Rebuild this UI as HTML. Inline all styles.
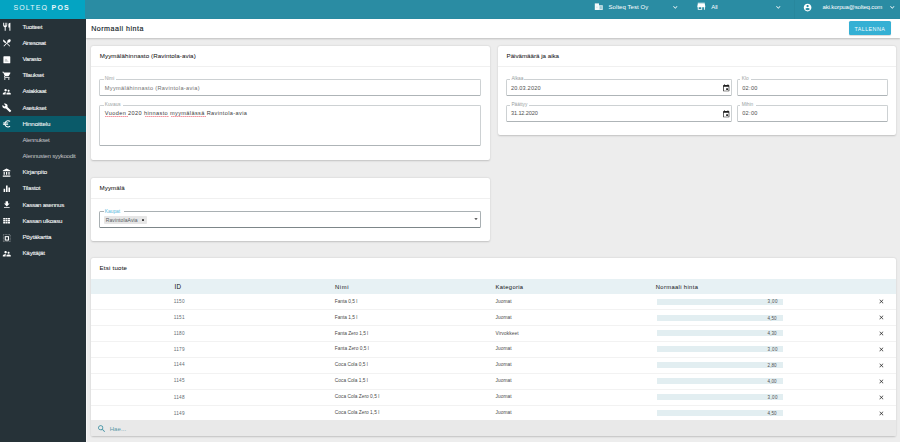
<!DOCTYPE html>
<html><head><meta charset="utf-8"><style>
html,body{margin:0;padding:0;}
body{width:900px;height:442px;overflow:hidden;position:relative;background:#ededed;font-family:"Liberation Sans", sans-serif;}
.t{position:absolute;white-space:nowrap;}
svg{display:block}
</style></head><body>
<div style="position:absolute;left:0.00px;top:0.00px;width:85.20px;height:19.00px;background:#04a4c2"></div>
<div style="position:absolute;left:85.20px;top:0.00px;width:814.80px;height:19.00px;background:#2a8ca3"></div>
<div style="position:absolute;left:794.30px;top:0.00px;width:0.70px;height:19.00px;background:rgba(0,0,0,0.03)"></div>
<div style="position:absolute;left:85.80px;top:19.00px;width:1.10px;height:423.00px;background:#f6f6f6"></div>
<div style="position:absolute;left:86.90px;top:37.50px;width:813.10px;height:404.50px;background:#ededed"></div>
<div style="position:absolute;left:85.20px;top:19.00px;width:814.80px;height:18.50px;background:#fff;box-shadow:0 0.7px 1.8px rgba(0,0,0,0.2)"></div>
<div style="position:absolute;left:0.00px;top:19.00px;width:85.55px;height:423.00px;background:#263238"></div>
<div style="position:absolute;left:0.00px;top:116.02px;width:85.55px;height:16.17px;background:#0a5a69"></div>
<div style="position:absolute;left:849.00px;top:21.30px;width:41.90px;height:14.20px;background:#35b0d4;border-radius:1.6px;box-shadow:0 0.5px 1px rgba(0,0,0,0.15)"></div>
<div style="position:absolute;left:90.80px;top:45.70px;width:398.80px;height:114.60px;background:#fff;border-radius:2px;box-shadow:0 0.8px 1.8px rgba(0,0,0,0.19)"></div>
<div style="position:absolute;left:90.80px;top:66.00px;width:398.80px;height:0.60px;background:#f0f0f0"></div>
<div style="position:absolute;left:99.40px;top:79.30px;width:381.30px;height:16.60px;border:0.8px solid #cdd1d3;border-bottom-color:#aeb4b7;border-radius:1.5px;box-sizing:border-box"></div>
<div style="position:absolute;left:103.60px;top:78.80px;width:12.60px;height:1.70px;background:#fff"></div>
<div style="position:absolute;left:99.40px;top:105.10px;width:381.30px;height:41.20px;border:0.8px solid #cdd1d3;border-bottom-color:#aeb4b7;border-radius:1.5px;box-sizing:border-box"></div>
<div style="position:absolute;left:103.60px;top:104.60px;width:19.40px;height:1.70px;background:#fff"></div>
<div style="position:absolute;left:105.00px;top:115.50px;width:23.00px;height:1.00px;background:repeating-linear-gradient(90deg,rgba(236,80,96,0.6) 0 1px,rgba(236,80,96,0.35) 1px 2px)"></div>
<div style="position:absolute;left:144.90px;top:115.50px;width:24.30px;height:1.00px;background:repeating-linear-gradient(90deg,rgba(236,80,96,0.6) 0 1px,rgba(236,80,96,0.35) 1px 2px)"></div>
<div style="position:absolute;left:170.70px;top:115.50px;width:35.20px;height:1.00px;background:repeating-linear-gradient(90deg,rgba(236,80,96,0.6) 0 1px,rgba(236,80,96,0.35) 1px 2px)"></div>
<div style="position:absolute;left:497.70px;top:45.70px;width:398.30px;height:89.10px;background:#fff;border-radius:2px;box-shadow:0 0.8px 1.8px rgba(0,0,0,0.19)"></div>
<div style="position:absolute;left:497.70px;top:66.00px;width:398.30px;height:0.60px;background:#f0f0f0"></div>
<div style="position:absolute;left:506.30px;top:79.30px;width:225.40px;height:16.70px;border:0.8px solid #cdd1d3;border-bottom-color:#aeb4b7;border-radius:1.5px;box-sizing:border-box"></div>
<div style="position:absolute;left:509.60px;top:78.80px;width:14.80px;height:1.70px;background:#fff"></div>
<div style="position:absolute;left:737.40px;top:79.30px;width:150.60px;height:16.70px;border:0.8px solid #cdd1d3;border-bottom-color:#aeb4b7;border-radius:1.5px;box-sizing:border-box"></div>
<div style="position:absolute;left:740.40px;top:78.80px;width:10.60px;height:1.70px;background:#fff"></div>
<div style="position:absolute;left:506.30px;top:105.00px;width:225.40px;height:16.60px;border:0.8px solid #cdd1d3;border-bottom-color:#aeb4b7;border-radius:1.5px;box-sizing:border-box"></div>
<div style="position:absolute;left:509.60px;top:104.50px;width:19.40px;height:1.70px;background:#fff"></div>
<div style="position:absolute;left:737.40px;top:105.00px;width:150.60px;height:16.60px;border:0.8px solid #cdd1d3;border-bottom-color:#aeb4b7;border-radius:1.5px;box-sizing:border-box"></div>
<div style="position:absolute;left:740.40px;top:104.50px;width:15.60px;height:1.70px;background:#fff"></div>
<div style="position:absolute;left:91.00px;top:177.50px;width:398.60px;height:63.50px;background:#fff;border-radius:2px;box-shadow:0 0.8px 1.8px rgba(0,0,0,0.19)"></div>
<div style="position:absolute;left:91.00px;top:197.80px;width:398.60px;height:0.60px;background:#f0f0f0"></div>
<div style="position:absolute;left:99.30px;top:211.40px;width:381.40px;height:17.00px;border:1.0px solid #a9b0b3;border-bottom-color:#7d8689;border-radius:1.5px;box-sizing:border-box"></div>
<div style="position:absolute;left:103.80px;top:210.90px;width:20.50px;height:1.70px;background:#fff"></div>
<div style="position:absolute;left:104.00px;top:216.00px;width:43.00px;height:7.70px;background:#e6e6e6;border-radius:1px"></div>
<div style="position:absolute;left:142.10px;top:218.70px;width:2.00px;height:2.30px;background:#333;border-radius:0.4px"></div>
<div style="position:absolute;left:91.20px;top:257.60px;width:804.80px;height:178.40px;background:#fff;border-radius:2px;box-shadow:0 0.8px 1.8px rgba(0,0,0,0.19)"></div>
<div style="position:absolute;left:91.20px;top:278.70px;width:804.80px;height:14.90px;background:#e7f1f4"></div>
<div style="position:absolute;left:656.90px;top:298.50px;width:126.00px;height:6.10px;background:#e2eef1"></div>
<div style="position:absolute;left:91.20px;top:309.20px;width:804.80px;height:1.00px;background:#f2f2f2"></div>
<div style="position:absolute;left:656.90px;top:314.60px;width:126.00px;height:6.10px;background:#e2eef1"></div>
<div style="position:absolute;left:91.20px;top:325.00px;width:804.80px;height:1.00px;background:#f2f2f2"></div>
<div style="position:absolute;left:656.90px;top:330.40px;width:126.00px;height:6.10px;background:#e2eef1"></div>
<div style="position:absolute;left:91.20px;top:340.90px;width:804.80px;height:1.00px;background:#f2f2f2"></div>
<div style="position:absolute;left:656.90px;top:346.30px;width:126.00px;height:6.10px;background:#e2eef1"></div>
<div style="position:absolute;left:91.20px;top:356.80px;width:804.80px;height:1.00px;background:#f2f2f2"></div>
<div style="position:absolute;left:656.90px;top:362.20px;width:126.00px;height:6.10px;background:#e2eef1"></div>
<div style="position:absolute;left:91.20px;top:372.80px;width:804.80px;height:1.00px;background:#f2f2f2"></div>
<div style="position:absolute;left:656.90px;top:378.20px;width:126.00px;height:6.10px;background:#e2eef1"></div>
<div style="position:absolute;left:91.20px;top:388.90px;width:804.80px;height:1.00px;background:#f2f2f2"></div>
<div style="position:absolute;left:656.90px;top:394.30px;width:126.00px;height:6.10px;background:#e2eef1"></div>
<div style="position:absolute;left:91.20px;top:404.90px;width:804.80px;height:1.00px;background:#f2f2f2"></div>
<div style="position:absolute;left:656.90px;top:410.30px;width:126.00px;height:6.10px;background:#e2eef1"></div>
<div style="position:absolute;left:91.20px;top:420.30px;width:804.80px;height:15.70px;background:#e9e9e9;border-radius:0 0 1.5px 1.5px"></div>
<svg style="position:absolute;left:2.20px;top:22.29px;width:9.60px;height:9.60px;" viewBox="0 0 24 24"><path fill="#fff" d="M11 9H9V2H7v7H5V2H3v7c0 2.12 1.66 3.84 3.75 3.97V22h2.5v-9.03C11.34 12.84 13 11.12 13 9V2h-2v7zm5-3v8h2.5v8H21V2c-2.76 0-5 2.24-5 4z"/></svg>
<svg style="position:absolute;left:2.20px;top:38.46px;width:9.60px;height:9.60px;" viewBox="0 0 24 24"><path fill="#fff" d="M8.1 13.34l2.83-2.83L3.91 3.5c-1.56 1.56-1.56 4.09 0 5.66l4.19 4.18zm6.78-1.81c1.53.71 3.68.21 5.27-1.38 1.91-1.91 2.28-4.65.81-6.12-1.46-1.46-4.2-1.1-6.12.81-1.59 1.59-2.09 3.74-1.38 5.27L3.7 19.87l1.41 1.41L12 14.41l6.88 6.88 1.41-1.41L13.41 13l1.47-1.47z"/></svg>
<svg style="position:absolute;left:2.20px;top:54.63px;width:9.60px;height:9.60px;" viewBox="0 0 24 24"><rect x="3.5" y="3.2" width="17.2" height="17.4" rx="1.5" fill="#fff"/><path d="M7 17V12l2.5-3 3 1.5 1.5 4 2.5 1.2V17z" fill="#263238" fill-opacity="0.25"/></svg>
<svg style="position:absolute;left:2.20px;top:70.80px;width:9.60px;height:9.60px;" viewBox="0 0 24 24"><path fill="#fff" d="M7 18c-1.1 0-1.99.9-1.99 2S5.9 22 7 22s2-.9 2-2-.9-2-2-2zM1 2v2h2l3.6 7.59-1.35 2.45c-.16.28-.25.61-.25.96 0 1.1.9 2 2 2h12v-2H7.42c-.14 0-.25-.11-.25-.25l.03-.12.9-1.63h7.45c.75 0 1.41-.41 1.75-1.03l3.58-6.49c.08-.14.12-.31.12-.48 0-.55-.45-1-1-1H5.21l-.94-2H1zm16 16c-1.1 0-1.99.9-1.99 2s.89 2 1.99 2 2-.9 2-2-.9-2-2-2z"/></svg>
<svg style="position:absolute;left:2.20px;top:86.97px;width:9.60px;height:9.60px;" viewBox="0 0 24 24"><path fill="#fff" d="M16.5 12c1.38 0 2.49-1.12 2.49-2.5S17.88 7 16.5 7C15.12 7 14 8.12 14 9.5s1.12 2.5 2.5 2.5zM9 11c1.66 0 2.99-1.34 2.99-3S10.66 5 9 5C7.34 5 6 6.34 6 8s1.34 3 3 3zm7.5 3c-1.83 0-5.5.92-5.5 2.75V19h11v-2.25c0-1.83-3.67-2.75-5.5-2.75zM9 13c-2.33 0-7 1.17-7 3.5V19h7v-2.25c0-.85.33-2.34 2.37-3.47C10.5 13.1 9.66 13 9 13z"/></svg>
<svg style="position:absolute;left:2.20px;top:103.14px;width:9.60px;height:9.60px;" viewBox="0 0 24 24"><path fill="#fff" d="M22.7 19l-9.1-9.1c.9-2.3.4-5-1.5-6.9-2-2-5-2.4-7.4-1.3L9 6 6 9 1.6 4.7C.4 7.1.9 10.1 2.9 12.1c1.9 1.9 4.6 2.4 6.9 1.5l9.1 9.1c.4.4 1 .4 1.4 0l2.3-2.3c.5-.4.5-1.1.1-1.4z"/></svg>
<svg style="position:absolute;left:2.20px;top:119.31px;width:9.60px;height:9.60px;" viewBox="0 0 24 24"><path fill="#fff" d="M15 18.5c-2.51 0-4.68-1.42-5.76-3.5H15l1-2H8.58c-.05-.33-.08-.66-.08-1s.03-.67.08-1H15l1-2H9.24C10.32 6.92 12.5 5.5 15 5.5c1.61 0 3.09.59 4.23 1.57L21 5.3C19.41 3.87 17.3 3 15 3c-3.92 0-7.24 2.51-8.48 6H3l-1 2h4.06c-.04.33-.06.66-.06 1s.02.67.06 1H3l-1 2h4.52c1.24 3.49 4.56 6 8.48 6 2.31 0 4.41-.87 6-2.3l-1.78-1.77c-1.13.98-2.6 1.57-4.22 1.57z"/></svg>
<svg style="position:absolute;left:2.20px;top:167.81px;width:9.60px;height:9.60px;" viewBox="0 0 24 24"><path fill="#fff" d="M4 10v7h3v-7H4zm6 0v7h3v-7h-3zM2 22h19v-3H2v3zm14-12v7h3v-7h-3zm-4.5-9L2 6v2h19V6l-9.5-5z"/></svg>
<svg style="position:absolute;left:2.20px;top:183.99px;width:9.60px;height:9.60px;" viewBox="0 0 24 24"><path fill="#fff" d="M10 20h4V4h-4v16zm-6 0h4v-8H4v8zM16 9v11h4V9h-4z"/></svg>
<svg style="position:absolute;left:2.20px;top:200.16px;width:9.60px;height:9.60px;" viewBox="0 0 24 24"><path fill="#fff" d="M19 9h-4V3H9v6H5l7 7 7-7zM5 18v2h14v-2H5z"/></svg>
<svg style="position:absolute;left:2.20px;top:216.33px;width:9.60px;height:9.60px;" viewBox="0 0 24 24"><path fill="#fff" d="M3 5h5v4H3zM9 5h5v4H9zM15 5h5v4h-5zM3 10h5v4H3zM9 10h5v4H9zM15 10h5v4h-5zM3 15h5v4H3zM9 15h5v4H9zM15 15h5v4h-5z"/></svg>
<svg style="position:absolute;left:2.20px;top:232.50px;width:9.60px;height:9.60px;" viewBox="0 0 24 24"><rect x="3.5" y="4" width="17" height="17.5" fill="none" stroke="#fff" stroke-opacity="0.45" stroke-width="2.2" stroke-dasharray="2.2 1.4"/><rect x="8.2" y="9.2" width="8" height="8.5" fill="none" stroke="#fff" stroke-width="2.6"/></svg>
<svg style="position:absolute;left:2.20px;top:248.67px;width:9.60px;height:9.60px;" viewBox="0 0 24 24"><path fill="#fff" d="M16.5 12c1.38 0 2.49-1.12 2.49-2.5S17.88 7 16.5 7C15.12 7 14 8.12 14 9.5s1.12 2.5 2.5 2.5zM9 11c1.66 0 2.99-1.34 2.99-3S10.66 5 9 5C7.34 5 6 6.34 6 8s1.34 3 3 3zm7.5 3c-1.83 0-5.5.92-5.5 2.75V19h11v-2.25c0-1.83-3.67-2.75-5.5-2.75zM9 13c-2.33 0-7 1.17-7 3.5V19h7v-2.25c0-.85.33-2.34 2.37-3.47C10.5 13.1 9.66 13 9 13z"/></svg>
<svg style="position:absolute;left:40px;top:3px;width:10px;height:10px" viewBox="0 0 10 10"><line x1="4.6" y1="5.6" x2="6.6" y2="7.2" stroke="#e9f7fa" stroke-width="0.9"/></svg>
<svg style="position:absolute;left:594.00px;top:1.80px;width:9.60px;height:9.60px;" viewBox="0 0 24 24"><rect x="2" y="3.5" width="10.5" height="16.5" fill="#fff" fill-opacity="0.95"/><rect x="5" y="12" width="4.5" height="1.6" fill="#2a8ca3" fill-opacity="0.25"/><rect x="12.5" y="8" width="9.5" height="12" fill="#fff" fill-opacity="0.8"/><rect x="14.5" y="10.5" width="5" height="7" fill="#2a8ca3" fill-opacity="0.35"/></svg>
<svg style="position:absolute;left:671.30px;top:3.10px;width:8.60px;height:8.60px;" viewBox="0 0 24 24"><path fill="#fff" d="M16.59 8.59L12 13.17 7.41 8.59 6 10l6 6 6-6z"/></svg>
<svg style="position:absolute;left:695.90px;top:1.30px;width:10.60px;height:10.60px;" viewBox="0 0 24 24"><path fill="#fff" d="M20 4H4v2h16V4zm1 10v-2l-1-5H4l-1 5v2h1v6h10v-6h4v6h2v-6h1zm-9 4H6v-4h6v4z"/></svg>
<svg style="position:absolute;left:774.00px;top:3.10px;width:8.60px;height:8.60px;" viewBox="0 0 24 24"><path fill="#fff" d="M16.59 8.59L12 13.17 7.41 8.59 6 10l6 6 6-6z"/></svg>
<svg style="position:absolute;left:802.85px;top:2.75px;width:9.20px;height:9.20px;" viewBox="0 0 24 24"><path fill="#fff" d="M12 2C6.48 2 2 6.48 2 12s4.48 10 10 10 10-4.48 10-10S17.52 2 12 2zm0 3c1.66 0 3 1.34 3 3s-1.34 3-3 3-3-1.34-3-3 1.34-3 3-3zm0 14.2c-2.5 0-4.71-1.28-6-3.22.03-1.99 4-3.08 6-3.08 1.99 0 5.97 1.09 6 3.08-1.29 1.94-3.5 3.22-6 3.22z"/></svg>
<svg style="position:absolute;left:888.00px;top:3.10px;width:8.60px;height:8.60px;" viewBox="0 0 24 24"><path fill="#fff" d="M16.59 8.59L12 13.17 7.41 8.59 6 10l6 6 6-6z"/></svg>
<svg style="position:absolute;left:721.70px;top:84.40px;width:8.40px;height:8.40px;" viewBox="0 0 24 24"><path fill="#1e1e1e" d="M17 12h-5v5h5v-5zM16 1v2H8V1H6v2H5c-1.11 0-1.99.9-1.99 2L3 19c0 1.1.89 2 2 2h14c1.1 0 2-.9 2-2V5c0-1.1-.9-2-2-2h-1V1h-2zm3 18H5V8h14v11z"/></svg>
<svg style="position:absolute;left:721.70px;top:109.70px;width:8.40px;height:8.40px;" viewBox="0 0 24 24"><path fill="#1e1e1e" d="M17 12h-5v5h5v-5zM16 1v2H8V1H6v2H5c-1.11 0-1.99.9-1.99 2L3 19c0 1.1.89 2 2 2h14c1.1 0 2-.9 2-2V5c0-1.1-.9-2-2-2h-1V1h-2zm3 18H5V8h14v11z"/></svg>
<svg style="position:absolute;left:472.30px;top:215.00px;width:8.00px;height:8.00px;" viewBox="0 0 24 24"><path fill="#333" d="M7 10l5 5 5-5z"/></svg>
<svg style="position:absolute;left:877.70px;top:298.15px;width:6.80px;height:6.80px;" viewBox="0 0 24 24"><path fill="#262626" d="M19 6.41L17.59 5 12 10.59 6.41 5 5 6.41 10.59 12 5 17.59 6.41 19 12 13.41 17.59 19 19 17.59 13.41 12z"/></svg>
<svg style="position:absolute;left:877.70px;top:314.25px;width:6.80px;height:6.80px;" viewBox="0 0 24 24"><path fill="#262626" d="M19 6.41L17.59 5 12 10.59 6.41 5 5 6.41 10.59 12 5 17.59 6.41 19 12 13.41 17.59 19 19 17.59 13.41 12z"/></svg>
<svg style="position:absolute;left:877.70px;top:330.05px;width:6.80px;height:6.80px;" viewBox="0 0 24 24"><path fill="#262626" d="M19 6.41L17.59 5 12 10.59 6.41 5 5 6.41 10.59 12 5 17.59 6.41 19 12 13.41 17.59 19 19 17.59 13.41 12z"/></svg>
<svg style="position:absolute;left:877.70px;top:345.95px;width:6.80px;height:6.80px;" viewBox="0 0 24 24"><path fill="#262626" d="M19 6.41L17.59 5 12 10.59 6.41 5 5 6.41 10.59 12 5 17.59 6.41 19 12 13.41 17.59 19 19 17.59 13.41 12z"/></svg>
<svg style="position:absolute;left:877.70px;top:361.85px;width:6.80px;height:6.80px;" viewBox="0 0 24 24"><path fill="#262626" d="M19 6.41L17.59 5 12 10.59 6.41 5 5 6.41 10.59 12 5 17.59 6.41 19 12 13.41 17.59 19 19 17.59 13.41 12z"/></svg>
<svg style="position:absolute;left:877.70px;top:377.85px;width:6.80px;height:6.80px;" viewBox="0 0 24 24"><path fill="#262626" d="M19 6.41L17.59 5 12 10.59 6.41 5 5 6.41 10.59 12 5 17.59 6.41 19 12 13.41 17.59 19 19 17.59 13.41 12z"/></svg>
<svg style="position:absolute;left:877.70px;top:393.95px;width:6.80px;height:6.80px;" viewBox="0 0 24 24"><path fill="#262626" d="M19 6.41L17.59 5 12 10.59 6.41 5 5 6.41 10.59 12 5 17.59 6.41 19 12 13.41 17.59 19 19 17.59 13.41 12z"/></svg>
<svg style="position:absolute;left:877.70px;top:409.95px;width:6.80px;height:6.80px;" viewBox="0 0 24 24"><path fill="#262626" d="M19 6.41L17.59 5 12 10.59 6.41 5 5 6.41 10.59 12 5 17.59 6.41 19 12 13.41 17.59 19 19 17.59 13.41 12z"/></svg>
<svg style="position:absolute;left:96.50px;top:424.20px;width:9.40px;height:9.40px;" viewBox="0 0 24 24"><path fill="#3a8ea0" d="M15.5 14h-.79l-.28-.27C15.41 12.59 16 11.11 16 9.5 16 5.91 13.09 3 9.5 3S3 5.91 3 9.5 5.91 16 9.5 16c1.61 0 3.09-.59 4.23-1.57l.27.28v.79l5 4.99L20.49 19l-4.99-5zm-6 0C7.01 14 5 11.99 5 9.5S7.01 5 9.5 5 14 7.01 14 9.5 11.99 14 9.5 14z"/></svg>
<div class="t" id="sb0" style="left:22.43px;top:23.79px;font-size:6.20px;line-height:6.20px;font-weight:400;color:#f4f6f7;letter-spacing:-0.354px;-webkit-text-stroke:0.08px #f4f6f7">Tuotteet</div>
<div class="t" id="sb1" style="left:22.43px;top:39.96px;font-size:6.20px;line-height:6.20px;font-weight:400;color:#f4f6f7;letter-spacing:-0.440px;-webkit-text-stroke:0.08px #f4f6f7">Ainesosat</div>
<div class="t" id="sb2" style="left:22.43px;top:56.13px;font-size:6.20px;line-height:6.20px;font-weight:400;color:#f4f6f7;letter-spacing:-0.293px;-webkit-text-stroke:0.08px #f4f6f7">Varasto</div>
<div class="t" id="sb3" style="left:22.43px;top:72.30px;font-size:6.20px;line-height:6.20px;font-weight:400;color:#f4f6f7;letter-spacing:-0.380px;-webkit-text-stroke:0.08px #f4f6f7">Tilaukset</div>
<div class="t" id="sb4" style="left:22.43px;top:88.47px;font-size:6.20px;line-height:6.20px;font-weight:400;color:#f4f6f7;letter-spacing:-0.340px;-webkit-text-stroke:0.08px #f4f6f7">Asiakkaat</div>
<div class="t" id="sb5" style="left:22.43px;top:104.64px;font-size:6.20px;line-height:6.20px;font-weight:400;color:#f4f6f7;letter-spacing:-0.400px;-webkit-text-stroke:0.08px #f4f6f7">Asetukset</div>
<div class="t" id="sb6" style="left:22.43px;top:120.81px;font-size:6.20px;line-height:6.20px;font-weight:400;color:#f4f6f7;letter-spacing:-0.128px;-webkit-text-stroke:0.08px #f4f6f7">Hinnoittelu</div>
<div class="t" id="sb7" style="left:22.43px;top:136.98px;font-size:6.20px;line-height:6.20px;font-weight:400;color:#c2c6c8;letter-spacing:-0.364px;">Alennukset</div>
<div class="t" id="sb8" style="left:22.43px;top:153.15px;font-size:6.20px;line-height:6.20px;font-weight:400;color:#c2c6c8;letter-spacing:-0.269px;">Alennusten syykoodit</div>
<div class="t" id="sb9" style="left:22.43px;top:169.32px;font-size:6.20px;line-height:6.20px;font-weight:400;color:#f4f6f7;letter-spacing:-0.116px;-webkit-text-stroke:0.08px #f4f6f7">Kirjanpito</div>
<div class="t" id="sb10" style="left:22.43px;top:185.49px;font-size:6.20px;line-height:6.20px;font-weight:400;color:#f4f6f7;letter-spacing:-0.240px;-webkit-text-stroke:0.08px #f4f6f7">Tilastot</div>
<div class="t" id="sb11" style="left:22.43px;top:201.66px;font-size:6.20px;line-height:6.20px;font-weight:400;color:#f4f6f7;letter-spacing:-0.302px;-webkit-text-stroke:0.08px #f4f6f7">Kassan asennus</div>
<div class="t" id="sb12" style="left:22.43px;top:217.83px;font-size:6.20px;line-height:6.20px;font-weight:400;color:#f4f6f7;letter-spacing:-0.283px;-webkit-text-stroke:0.08px #f4f6f7">Kassan ulkoasu</div>
<div class="t" id="sb13" style="left:22.43px;top:234.00px;font-size:6.20px;line-height:6.20px;font-weight:400;color:#f4f6f7;letter-spacing:-0.216px;-webkit-text-stroke:0.08px #f4f6f7">Pöytäkartta</div>
<div class="t" id="sb14" style="left:22.43px;top:250.17px;font-size:6.20px;line-height:6.20px;font-weight:400;color:#f4f6f7;letter-spacing:-0.180px;-webkit-text-stroke:0.08px #f4f6f7">Käyttäjät</div>
<div class="t" id="logo1" style="left:13.38px;top:4.27px;font-size:7.00px;line-height:7.00px;font-weight:400;color:#e9f7fa;letter-spacing:1.136px;height:6.15px;overflow:hidden">SOLTEQ</div>
<div class="t" id="logo2" style="left:51.58px;top:4.27px;font-size:7.00px;line-height:7.00px;font-weight:700;color:#e9f7fa;letter-spacing:1.200px;">POS</div>
<div class="t" id="org" style="left:608.54px;top:4.42px;font-size:6.00px;line-height:6.00px;font-weight:400;color:#ffffff;letter-spacing:0.062px;">Solteq Test Oy</div>
<div class="t" id="all" style="left:711.34px;top:4.42px;font-size:6.00px;line-height:6.00px;font-weight:400;color:#ffffff;letter-spacing:-0.160px;">All</div>
<div class="t" id="user" style="left:822.54px;top:4.42px;font-size:6.00px;line-height:6.00px;font-weight:400;color:#ffffff;letter-spacing:-0.148px;">aki.korpua@solteq.com</div>
<div class="t" id="title" style="left:91.17px;top:25.89px;font-size:7.10px;line-height:7.10px;font-weight:400;color:#141c28;letter-spacing:0.505px;-webkit-text-stroke:0.15px #141c28">Normaali hinta</div>
<div class="t" id="save" style="left:854.48px;top:26.73px;font-size:5.40px;line-height:5.40px;font-weight:400;color:#f2fbfd;letter-spacing:0.411px;">TALLENNA</div>
<div class="t" id="c1h" style="left:99.73px;top:52.95px;font-size:6.20px;line-height:6.20px;font-weight:400;color:#151515;letter-spacing:0.090px;-webkit-text-stroke:0.04px #151515">Myymälähinnasto (Ravintola-avia)</div>
<div class="t" id="l_nimi" style="left:104.71px;top:76.84px;font-size:4.80px;line-height:4.80px;font-weight:400;color:#9a9fa2;letter-spacing:0.000px;">Nimi</div>
<div class="t" id="v_nimi" style="left:104.86px;top:86.06px;font-size:5.60px;line-height:5.60px;font-weight:400;color:#707070;letter-spacing:0.335px;">Myymälähinnasto (Ravintola-avia)</div>
<div class="t" id="l_kuv" style="left:104.71px;top:102.74px;font-size:4.80px;line-height:4.80px;font-weight:400;color:#9a9fa2;letter-spacing:0.000px;">Kuvaus</div>
<div class="t" id="v_kuv" style="left:104.86px;top:110.66px;font-size:5.60px;line-height:5.60px;font-weight:400;color:#3c3c3c;letter-spacing:0.370px;">Vuoden 2020 hinnasto myymälässä Ravintola-avia</div>
<div class="t" id="c2h" style="left:506.53px;top:52.95px;font-size:6.20px;line-height:6.20px;font-weight:400;color:#151515;letter-spacing:-0.005px;-webkit-text-stroke:0.04px #151515">Päivämäärä ja aika</div>
<div class="t" id="l_alk" style="left:511.41px;top:76.84px;font-size:4.80px;line-height:4.80px;font-weight:400;color:#9a9fa2;letter-spacing:0.000px;">Alkaa</div>
<div class="t" id="v_alk" style="left:511.06px;top:86.16px;font-size:5.60px;line-height:5.60px;font-weight:400;color:#505050;letter-spacing:0.169px;">20.03.2020</div>
<div class="t" id="l_klo" style="left:741.71px;top:76.84px;font-size:4.80px;line-height:4.80px;font-weight:400;color:#9a9fa2;letter-spacing:0.000px;">Klo</div>
<div class="t" id="v_klo" style="left:742.16px;top:86.16px;font-size:5.60px;line-height:5.60px;font-weight:400;color:#505050;letter-spacing:0.320px;">02:00</div>
<div class="t" id="l_pat" style="left:511.41px;top:102.54px;font-size:4.80px;line-height:4.80px;font-weight:400;color:#9a9fa2;letter-spacing:0.000px;">Päättyy</div>
<div class="t" id="v_pat" style="left:511.06px;top:111.36px;font-size:5.60px;line-height:5.60px;font-weight:400;color:#505050;letter-spacing:-0.142px;">31.12.2020</div>
<div class="t" id="l_mih" style="left:741.71px;top:102.54px;font-size:4.80px;line-height:4.80px;font-weight:400;color:#9a9fa2;letter-spacing:0.000px;">Mihin</div>
<div class="t" id="v_mih" style="left:742.16px;top:111.36px;font-size:5.60px;line-height:5.60px;font-weight:400;color:#505050;letter-spacing:0.320px;">02:00</div>
<div class="t" id="c3h" style="left:99.53px;top:184.85px;font-size:6.20px;line-height:6.20px;font-weight:400;color:#151515;letter-spacing:0.080px;-webkit-text-stroke:0.04px #151515">Myymälä</div>
<div class="t" id="l_kau" style="left:104.71px;top:209.95px;font-size:4.90px;line-height:4.90px;font-weight:400;color:#5ab8db;letter-spacing:0.000px;">Kaupat</div>
<div class="t" id="v_kau" style="left:105.70px;top:217.87px;font-size:5.00px;line-height:5.00px;font-weight:400;color:#555b5e;letter-spacing:0.120px;">RavintolaAvia</div>
<div class="t" id="c4h" style="left:99.53px;top:265.45px;font-size:6.20px;line-height:6.20px;font-weight:400;color:#151515;letter-spacing:0.187px;-webkit-text-stroke:0.04px #151515">Etsi tuote</div>
<div class="t" id="h_id" style="left:174.52px;top:284.17px;font-size:6.30px;line-height:6.30px;font-weight:400;color:#101010;letter-spacing:0.350px;">ID</div>
<div class="t" id="h_nimi" style="left:335.05px;top:284.59px;font-size:5.80px;line-height:5.80px;font-weight:400;color:#101010;letter-spacing:0.640px;">Nimi</div>
<div class="t" id="h_kat" style="left:495.55px;top:284.59px;font-size:5.80px;line-height:5.80px;font-weight:400;color:#101010;letter-spacing:0.340px;">Kategoria</div>
<div class="t" id="h_hin" style="left:655.75px;top:284.59px;font-size:5.80px;line-height:5.80px;font-weight:400;color:#101010;letter-spacing:0.369px;">Normaali hinta</div>
<div class="t" id="r0id" style="left:173.72px;top:299.72px;font-size:4.70px;line-height:4.70px;font-weight:400;color:#646c71;letter-spacing:0.267px;">1150</div>
<div class="t" id="r0nm" style="left:334.81px;top:299.64px;font-size:4.80px;line-height:4.80px;font-weight:400;color:#4a4a4a;letter-spacing:-0.016px;">Fanta 0,5 l</div>
<div class="t" id="r0kat" style="left:495.61px;top:299.64px;font-size:4.80px;line-height:4.80px;font-weight:400;color:#4a4a4a;letter-spacing:0.032px;">Juomat</div>
<div class="t" id="r0pr" style="left:767.53px;top:300.49px;font-size:4.50px;line-height:4.50px;font-weight:400;color:#505050;letter-spacing:0.373px;">3,00</div>
<div class="t" id="r1id" style="left:173.72px;top:315.82px;font-size:4.70px;line-height:4.70px;font-weight:400;color:#646c71;letter-spacing:0.267px;">1151</div>
<div class="t" id="r1nm" style="left:334.81px;top:315.74px;font-size:4.80px;line-height:4.80px;font-weight:400;color:#4a4a4a;letter-spacing:-0.016px;">Fanta 1,5 l</div>
<div class="t" id="r1kat" style="left:495.61px;top:315.74px;font-size:4.80px;line-height:4.80px;font-weight:400;color:#4a4a4a;letter-spacing:0.032px;">Juomat</div>
<div class="t" id="r1pr" style="left:767.53px;top:316.59px;font-size:4.50px;line-height:4.50px;font-weight:400;color:#505050;letter-spacing:0.107px;">4,50</div>
<div class="t" id="r2id" style="left:173.72px;top:331.62px;font-size:4.70px;line-height:4.70px;font-weight:400;color:#646c71;letter-spacing:0.267px;">1180</div>
<div class="t" id="r2nm" style="left:334.81px;top:331.54px;font-size:4.80px;line-height:4.80px;font-weight:400;color:#4a4a4a;letter-spacing:-0.032px;">Fanta Zero 1,5 l</div>
<div class="t" id="r2kat" style="left:495.61px;top:331.54px;font-size:4.80px;line-height:4.80px;font-weight:400;color:#4a4a4a;letter-spacing:0.071px;">Virvokkeet</div>
<div class="t" id="r2pr" style="left:767.53px;top:332.39px;font-size:4.50px;line-height:4.50px;font-weight:400;color:#505050;letter-spacing:0.107px;">4,30</div>
<div class="t" id="r3id" style="left:173.72px;top:347.52px;font-size:4.70px;line-height:4.70px;font-weight:400;color:#646c71;letter-spacing:0.267px;">1179</div>
<div class="t" id="r3nm" style="left:334.81px;top:347.44px;font-size:4.80px;line-height:4.80px;font-weight:400;color:#4a4a4a;letter-spacing:0.011px;">Fanta Zero 0,5 l</div>
<div class="t" id="r3kat" style="left:495.61px;top:347.44px;font-size:4.80px;line-height:4.80px;font-weight:400;color:#4a4a4a;letter-spacing:0.032px;">Juomat</div>
<div class="t" id="r3pr" style="left:767.53px;top:348.29px;font-size:4.50px;line-height:4.50px;font-weight:400;color:#505050;letter-spacing:0.373px;">3,00</div>
<div class="t" id="r4id" style="left:173.72px;top:363.42px;font-size:4.70px;line-height:4.70px;font-weight:400;color:#646c71;letter-spacing:0.267px;">1144</div>
<div class="t" id="r4nm" style="left:334.81px;top:363.34px;font-size:4.80px;line-height:4.80px;font-weight:400;color:#4a4a4a;letter-spacing:0.023px;">Coca Cola 0,5 l</div>
<div class="t" id="r4kat" style="left:495.61px;top:363.34px;font-size:4.80px;line-height:4.80px;font-weight:400;color:#4a4a4a;letter-spacing:0.032px;">Juomat</div>
<div class="t" id="r4pr" style="left:767.53px;top:364.19px;font-size:4.50px;line-height:4.50px;font-weight:400;color:#505050;letter-spacing:0.107px;">2,80</div>
<div class="t" id="r5id" style="left:173.72px;top:379.42px;font-size:4.70px;line-height:4.70px;font-weight:400;color:#646c71;letter-spacing:0.267px;">1145</div>
<div class="t" id="r5nm" style="left:334.81px;top:379.34px;font-size:4.80px;line-height:4.80px;font-weight:400;color:#4a4a4a;letter-spacing:0.023px;">Coca Cola 1,5 l</div>
<div class="t" id="r5kat" style="left:495.61px;top:379.34px;font-size:4.80px;line-height:4.80px;font-weight:400;color:#4a4a4a;letter-spacing:0.032px;">Juomat</div>
<div class="t" id="r5pr" style="left:767.53px;top:380.19px;font-size:4.50px;line-height:4.50px;font-weight:400;color:#505050;letter-spacing:0.107px;">4,00</div>
<div class="t" id="r6id" style="left:173.72px;top:395.52px;font-size:4.70px;line-height:4.70px;font-weight:400;color:#646c71;letter-spacing:0.267px;">1148</div>
<div class="t" id="r6nm" style="left:334.81px;top:395.44px;font-size:4.80px;line-height:4.80px;font-weight:400;color:#4a4a4a;letter-spacing:0.025px;">Coca Cola Zero 0,5 l</div>
<div class="t" id="r6kat" style="left:495.61px;top:395.44px;font-size:4.80px;line-height:4.80px;font-weight:400;color:#4a4a4a;letter-spacing:0.032px;">Juomat</div>
<div class="t" id="r6pr" style="left:767.53px;top:396.29px;font-size:4.50px;line-height:4.50px;font-weight:400;color:#505050;letter-spacing:0.373px;">3,00</div>
<div class="t" id="r7id" style="left:173.72px;top:411.52px;font-size:4.70px;line-height:4.70px;font-weight:400;color:#646c71;letter-spacing:0.267px;">1149</div>
<div class="t" id="r7nm" style="left:334.81px;top:411.44px;font-size:4.80px;line-height:4.80px;font-weight:400;color:#4a4a4a;letter-spacing:0.025px;">Coca Cola Zero 1,5 l</div>
<div class="t" id="r7kat" style="left:495.61px;top:411.44px;font-size:4.80px;line-height:4.80px;font-weight:400;color:#4a4a4a;letter-spacing:0.032px;">Juomat</div>
<div class="t" id="r7pr" style="left:767.53px;top:412.29px;font-size:4.50px;line-height:4.50px;font-weight:400;color:#505050;letter-spacing:0.107px;">4,50</div>
<div class="t" id="hae" style="left:109.64px;top:426.32px;font-size:6.00px;line-height:6.00px;font-weight:400;color:#5b98a7;letter-spacing:0.100px;">Hae...</div>
</body></html>
